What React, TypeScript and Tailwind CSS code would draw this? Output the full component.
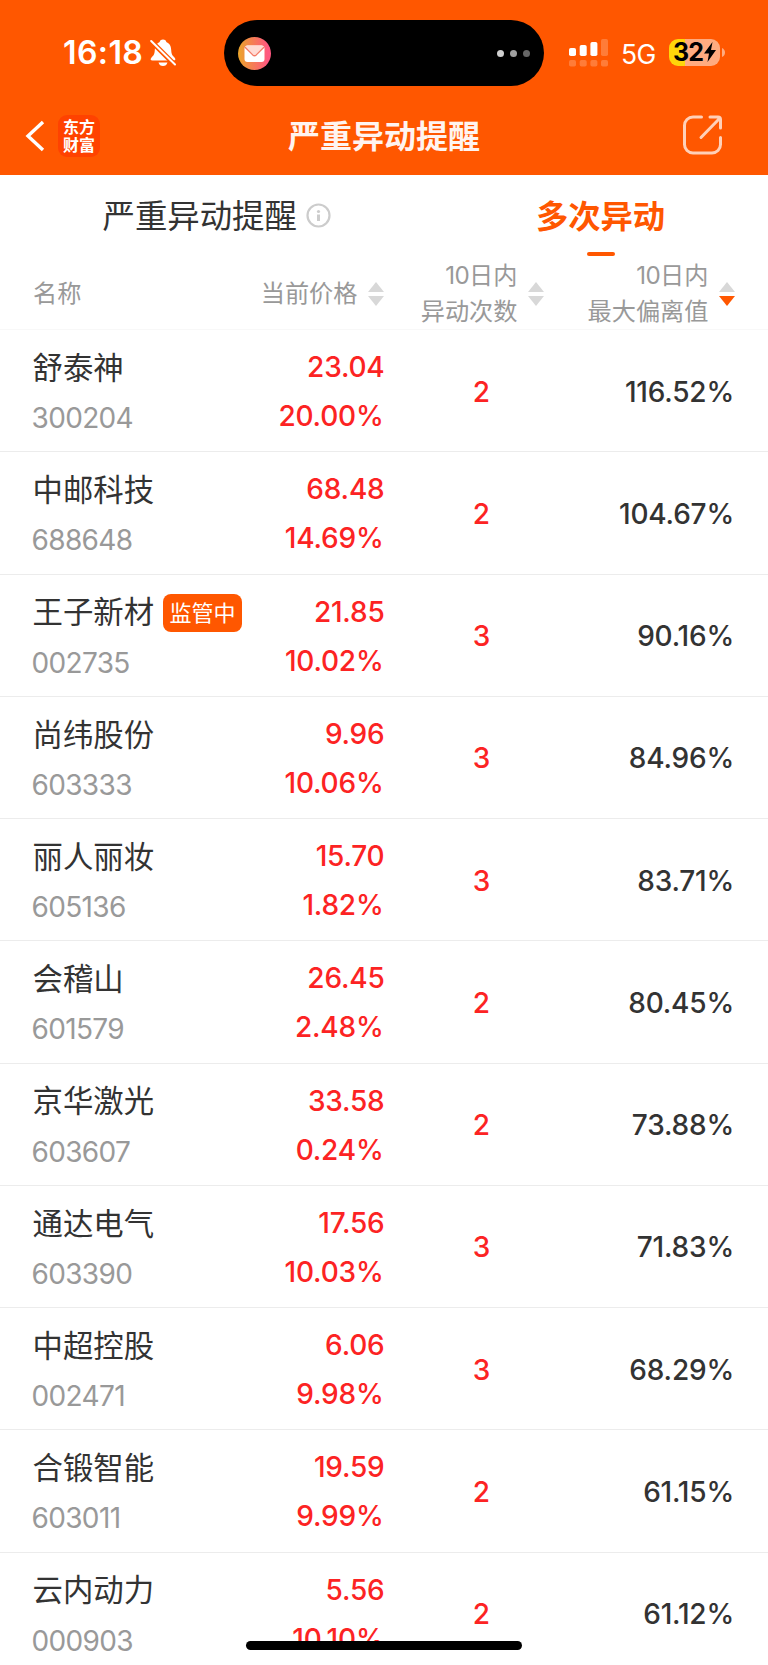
type Stock = {
    name: string
    code: string
    price: string
    change: string
    times: number
    deviation: string
    tag?: string
}

const stocks: Stock[] = [
    { name: "舒泰神", code: "300204", price: "23.04", change: "20.00%", times: 2, deviation: "116.52%" },
    { name: "中邮科技", code: "688648", price: "68.48", change: "14.69%", times: 2, deviation: "104.67%" },
    { name: "王子新材", code: "002735", price: "21.85", change: "10.02%", times: 3, deviation: "90.16%", tag: "监管中" },
    { name: "尚纬股份", code: "603333", price: "9.96", change: "10.06%", times: 3, deviation: "84.96%" },
    { name: "丽人丽妆", code: "605136", price: "15.70", change: "1.82%", times: 3, deviation: "83.71%" },
    { name: "会稽山", code: "601579", price: "26.45", change: "2.48%", times: 2, deviation: "80.45%" },
    { name: "京华激光", code: "603607", price: "33.58", change: "0.24%", times: 2, deviation: "73.88%" },
    { name: "通达电气", code: "603390", price: "17.56", change: "10.03%", times: 3, deviation: "71.83%" },
    { name: "中超控股", code: "002471", price: "6.06", change: "9.98%", times: 3, deviation: "68.29%" },
    { name: "合锻智能", code: "603011", price: "19.59", change: "9.99%", times: 2, deviation: "61.15%" },
    { name: "云内动力", code: "000903", price: "5.56", change: "10.10%", times: 2, deviation: "61.12%" },
]

export default function App() {
    return (
        <div className="relative flex h-[1665px] w-[768px] flex-col overflow-hidden bg-white font-['Inter','Noto_Sans_CJK_SC',sans-serif] text-[#333]">
            <header className="h-[175px] shrink-0 bg-[#ff5700] text-white">
                <StatusBar />
                <NavBar />
            </header>
            <Tabs />
            <TableHead />
            <main className="shrink-0">
                {stocks.map((stock) => <StockRow key={stock.code} stock={stock} />)}
            </main>
            <div className="absolute bottom-[15px] left-[246px] h-[9px] w-[276px] rounded-full bg-black" />
        </div>
    )
}

const StatusBar = () => (
    <div className="flex h-[106px] items-center">
        <div className="flex w-[224px] items-center pl-[63px]">
            <span className="w-[87px] text-[32px] leading-none font-semibold tracking-[0.4px]">16:18</span>
            <BellOff />
        </div>
        <div className="flex h-[66px] w-[320px] items-center justify-between rounded-full bg-black pr-[14px] pl-[14px]">
            <MailBadge />
            <div className="flex gap-[6px]">
                <span className="size-[7px] rounded-full bg-[#d0d0d0]" />
                <span className="size-[7px] rounded-full bg-[#a0a0a0]" />
                <span className="size-[7px] rounded-full bg-[#666]" />
            </div>
        </div>
        <div className="flex items-center pl-[25px]">
            <Signal />
            <span className="mt-[2px] ml-[13px] w-[48px] text-[26.5px] leading-none tracking-[-0.5px]">5G</span>
            <Battery />
        </div>
    </div>
)

const NavBar = () => (
    <div className="flex h-[60px] items-center justify-between pr-[45px] pl-[25px]">
        <div className="flex w-[120px] items-center gap-[13px]">
            <svg className="h-[32px] w-[20px]" viewBox="0 0 20 32" fill="none" stroke="white" strokeWidth="3.4">
                <path d="M18 2L3 16L18 30" strokeLinejoin="miter" />
            </svg>
            <div className="flex size-[42px] flex-col items-center justify-center rounded-[9px] bg-[#ff4200] text-[16px] leading-[18px] font-bold">
                <span>东方</span>
                <span>财富</span>
            </div>
        </div>
        <h1 className="mt-[2px] text-[32px] leading-none font-bold text-[#fff4f0]">严重异动提醒</h1>
        <div className="flex w-[100px] justify-end">
            <svg className="mb-[3px] size-[40px]" viewBox="0 0 40 40" fill="none" stroke="#ffd0b8" strokeWidth="3" strokeLinecap="round">
                <path d="M18.500 2H10A8.500 8.500 0 0 0 1.500 10.500V29.500A8.500 8.500 0 0 0 10 38H29A8.500 8.500 0 0 0 37.500 29.500V22.500" />
                <path d="M27 2H35Q37.500 2 37.500 4.500V13M36.500 3.500L18 22.500" />
            </svg>
        </div>
    </div>
)

const Tabs = () => (
    <nav className="flex h-[83px] shrink-0">
        <div className="flex w-[435px] items-center gap-[9px] pl-[102.500px] text-[32.4px] leading-none">
            <span className="mt-[2px]">严重异动提醒</span>
            <svg className="mb-[2px] size-[25px]" viewBox="0 0 25 25" fill="none">
                <circle cx="12.500" cy="12.500" r="11" stroke="#ccc" strokeWidth="2.2" />
                <circle cx="12.500" cy="8.500" r="1.600" fill="#ccc" />
                <path d="M12.500 11.500V18" stroke="#ccc" strokeWidth="3" />
            </svg>
        </div>
        <div className="flex w-[331px] flex-col items-center text-[32.3px] leading-none font-bold text-[#ff5700]">
            <span className="mt-[26px]">多次异动</span>
            <span className="mt-[19px] h-[4px] w-[28px] rounded-full bg-[#ff5700]" />
        </div>
    </nav>
)

const TableHead = () => (
    <div className="flex h-[72px] shrink-0 items-center border-b border-[#f8f8f8] pl-[33px] text-right text-[24.2px] leading-[36px] text-[#999]">
        <div className="w-[160px] pt-[1px] text-left">名称</div>
        <div className="flex w-[191px] items-center justify-end gap-[10.500px]">
            <span className="pt-[1px]">当前价格</span>
            <SortArrows />
        </div>
        <div className="flex w-[160px] items-center justify-end gap-[10.500px]">
            <span className="pt-[1px]"><span className="tracking-[-0.6px]">10</span>日内<br />异动次数</span>
            <SortArrows />
        </div>
        <div className="flex w-[191px] items-center justify-end gap-[10.500px]">
            <span className="pt-[1px]"><span className="tracking-[-0.6px]">10</span>日内<br />最大偏离值</span>
            <SortArrows active />
        </div>
    </div>
)

const StockRow = ({ stock }: { stock: Stock }) => (
    <div className="flex h-[122.25px] border-b-[1.5px] border-[#ececec] pl-[32.500px] text-[28px] leading-none">
        <div className="flex w-[220px] flex-col">
            <div className="mt-[17px] flex h-[42px] items-center gap-[9px] text-[30.4px] whitespace-nowrap">
                {stock.name}
                {stock.tag && (
                    <span className="flex h-[38px] items-center rounded-[8px] bg-[#ff5700] px-[6.500px] text-[22px] text-white">{stock.tag}</span>
                )}
            </div>
            <span className="mt-[15px] -ml-px tracking-[-0.65px] text-[#999]">{stock.code}</span>
        </div>
        <div className="flex w-[132px] flex-col items-end font-medium tracking-[-0.2px] text-[#fc2323]">
            <span className="mt-[23px]">{stock.price}</span>
            <span className="mt-[21px] mr-[1px]">{stock.change}</span>
        </div>
        <span className="w-[194px] pt-[47.500px] text-center font-medium text-[#fc2323]">{stock.times}</span>
        <span className="w-[155.500px] pt-[47.500px] text-right font-medium tracking-[-0.2px]">{stock.deviation}</span>
    </div>
)

const SortArrows = ({ active = false }: { active?: boolean }) => (
    <svg className="h-[24px] w-[16px]" viewBox="0 0 16 24">
        <path d="M8 0L16 10H0Z" fill="#d8d8d8" />
        <path d="M8 24L16 14H0Z" fill={active ? "#ff5700" : "#d8d8d8"} />
    </svg>
)

const BellOff = () => (
    <svg className="h-[28px] w-[26px]" viewBox="0 0 26 28" fill="white">
        <path d="M13 0.500C11 0.500 9.800 1.800 9.700 3C6 4.500 5 7.500 4.800 11C4.600 15.500 3.500 16.500 1.500 18.500C0 20.300 0.500 21.500 2.500 21.500H23.500C25.500 21.500 26 20.300 24.500 18.500C22.500 16.500 21.400 15.500 21.200 11C21 7.500 20 4.500 16.300 3C16.200 1.800 15 0.500 13 0.500Z" />
        <path d="M8.500 23.500H17.500C16.800 26 15.300 27 13 27C10.700 27 9.200 26 8.500 23.500Z" />
        <path d="M1 2L25 26" stroke="#ff5700" strokeWidth="5" />
        <path d="M1.200 2L25 25.500" stroke="white" strokeWidth="2" strokeLinecap="round" />
    </svg>
)

const MailBadge = () => (
    <svg className="size-[33px]" viewBox="0 0 33 33">
        <defs>
            <linearGradient id="mail" x1="0" x2="1">
                <stop offset="0" stopColor="#eba52a" />
                <stop offset="0.900" stopColor="#ff5780" />
            </linearGradient>
        </defs>
        <circle cx="16.500" cy="16.500" r="16.500" fill="url(#mail)" />
        <rect x="6.500" y="8.500" width="20" height="16.500" rx="3" fill="white" />
        <path d="M7 10Q7.500 8.500 9.500 8.500H23.500Q25.500 8.500 26 10L18.300 17.700Q16.500 19.300 14.700 17.700Z" fill="#ffdcd5" />
        <path d="M6.800 10L14.700 17.900Q16.500 19.500 18.300 17.900L26.200 10" fill="none" stroke="#f47a65" strokeWidth="1.300" />
    </svg>
)

const Signal = () => (
    <svg className="mb-[1px] h-[28px] w-[39px]" viewBox="0 0 39 28" fill="white">
        <rect x="0" y="9" width="7" height="8" rx="1.800" />
        <rect x="10.700" y="6" width="7" height="11" rx="1.800" />
        <rect x="21.400" y="3" width="7" height="14" rx="1.800" />
        <g opacity="0.220">
            <rect x="32" y="0" width="7" height="17" rx="1.800" />
            <rect x="0" y="21" width="7" height="6.500" rx="1.800" />
            <rect x="10.700" y="21" width="7" height="6.500" rx="1.800" />
            <rect x="21.400" y="21" width="7" height="6.500" rx="1.800" />
            <rect x="32" y="21" width="7" height="6.500" rx="1.800" />
        </g>
    </svg>
)

const Battery = () => (
    <div className="mb-[2px] flex items-center gap-[2px]">
        <div className="flex h-[27px] w-[51px] items-center rounded-[9px] bg-linear-to-r from-[#ffd60a] from-32% to-[#ffab80] to-32% pl-[4px] text-black">
            <span className="w-[31px] text-[25px] leading-none font-bold tracking-[-0.8px]">32</span>
            <svg className="h-[20px] w-[12px]" viewBox="0 0 12 20">
                <path d="M8.500 0L0 11.500H5L3.500 20L12 8H7Z" />
            </svg>
        </div>
        <svg className="h-[9px] w-[3px]" viewBox="0 0 3 9">
            <path d="M0 0Q3 1.500 3 4.500Q3 7.500 0 9Z" fill="#ffab80" />
        </svg>
    </div>
)
